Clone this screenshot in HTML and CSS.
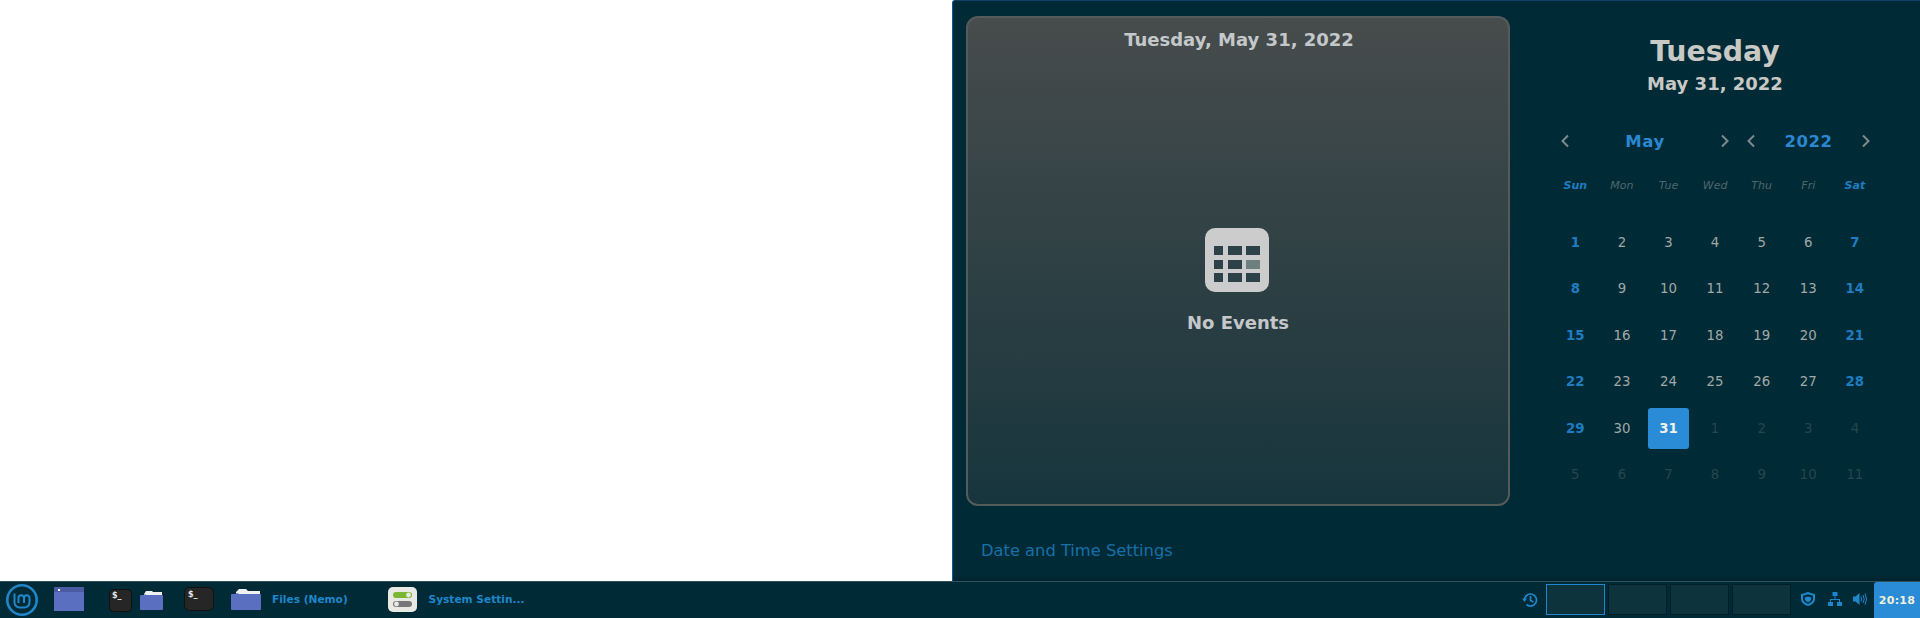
FILE: index.html
```html
<!DOCTYPE html>
<html>
  <head>
    <meta charset="UTF-8">
    <title>Calendar applet</title>
    <link rel="stylesheet" href="styles.css">
  </head>
  <body>
    <!-- Section 1: desktop and calendar popup -->
    <div class="desktop">
      <div class="window"></div>
      <div class="popup">
        <div class="events">
          <div class="events-title">Tuesday, May 31, 2022</div>
          <div class="events-empty">
            <svg class="empty-icon" width="64" height="64" viewBox="0 0 64 64">
              <rect width="64" height="64" rx="10" fill="#cccccc"/>
              <g fill="#2d4148">
                <rect x="9" y="18" width="9" height="9"/><rect x="23" y="18" width="14" height="9"/><rect x="41" y="18" width="14" height="9"/>
                <rect x="9" y="32" width="9" height="9"/><rect x="23" y="32" width="14" height="9"/><rect x="41" y="32" width="14" height="9" fill="#6f7f7f"/>
                <rect x="9" y="45" width="9" height="9"/><rect x="23" y="45" width="14" height="9"/><rect x="41" y="45" width="14" height="9"/>
              </g>
            </svg>
            <div class="empty-text">No Events</div>
          </div>
        </div>
        <div class="side">
          <div class="side-day">Tuesday</div>
          <div class="side-date">May 31, 2022</div>
          <div class="nav">
            <div class="nav-part nav-month">
              <svg class="chev" width="10" height="14" viewBox="0 0 10 14"><path d="M8 1.5 2.5 7 8 12.5"/></svg>
              <span class="nav-label">May</span>
              <svg class="chev" width="10" height="14" viewBox="0 0 10 14"><path d="M2 1.5 7.5 7 2 12.5"/></svg>
            </div>
            <div class="nav-part nav-year">
              <svg class="chev" width="10" height="14" viewBox="0 0 10 14"><path d="M8 1.5 2.5 7 8 12.5"/></svg>
              <span class="nav-label">2022</span>
              <svg class="chev" width="10" height="14" viewBox="0 0 10 14"><path d="M2 1.5 7.5 7 2 12.5"/></svg>
            </div>
          </div>
          <div class="weekdays">
            <span class="wk wk-end">Sun</span><span class="wk">Mon</span><span class="wk">Tue</span><span class="wk">Wed</span><span class="wk">Thu</span><span class="wk">Fri</span><span class="wk wk-end">Sat</span>
          </div>
          <div class="days">
            <span class="day end">1</span><span class="day">2</span><span class="day">3</span><span class="day">4</span><span class="day">5</span><span class="day">6</span><span class="day end">7</span>
            <span class="day end">8</span><span class="day">9</span><span class="day">10</span><span class="day">11</span><span class="day">12</span><span class="day">13</span><span class="day end">14</span>
            <span class="day end">15</span><span class="day">16</span><span class="day">17</span><span class="day">18</span><span class="day">19</span><span class="day">20</span><span class="day end">21</span>
            <span class="day end">22</span><span class="day">23</span><span class="day">24</span><span class="day">25</span><span class="day">26</span><span class="day">27</span><span class="day end">28</span>
            <span class="day end">29</span><span class="day">30</span><span class="day today">31</span><span class="day other">1</span><span class="day other">2</span><span class="day other">3</span><span class="day other">4</span>
            <span class="day other">5</span><span class="day other">6</span><span class="day other">7</span><span class="day other">8</span><span class="day other">9</span><span class="day other">10</span><span class="day other">11</span>
          </div>
        </div>
        <div class="settings-link">Date and Time Settings</div>
      </div>
    </div>

    <!-- Section 2: bottom panel -->
    <div class="panel">
      <svg class="logo" width="32" height="32" viewBox="0 0 32 32" fill="none" stroke="#1f86c9">
        <circle cx="16" cy="16" r="14.7" stroke-width="2.6"/>
        <path d="M8.500 9.500V18.500a5 5 0 0 0 5 5h5a5 5 0 0 0 5-5V14a2.750 2.750 0 0 0-5.500 0V19M18 14a2.750 2.750 0 0 0-5.500 0V19" stroke-width="2"/>
      </svg>
      <svg class="app raise app-window" width="30" height="24" viewBox="0 0 30 24">
        <rect width="30" height="24" fill="#5a6fc0"/>
        <rect width="30" height="5" fill="#4a5ba3"/>
        <rect x="4" y="2" width="2" height="2" fill="#ffffff"/>
      </svg>
      <svg class="app app-term-small" width="23" height="23" viewBox="0 0 23 23">
        <rect x=".5" y=".5" width="22" height="22" rx="4" fill="#262626" stroke="#111111"/>
        <text x="3" y="9" class="term-text">$_</text>
      </svg>
      <svg class="app app-folder-small" width="23" height="19" viewBox="0 0 23 19">
        <path d="M4 3 6 0h6l1 1h9v3H4z" fill="#f0f0f0"/>
        <path d="M0 5q0-1 1-1h3l1-1 1 1h16q1 0 1 1v13q0 1-1 1H1q-1 0-1-1z" fill="#5a6fc0"/>
      </svg>
      <svg class="app raise app-term" width="30" height="24" viewBox="0 0 30 24">
        <rect x=".5" y=".5" width="29" height="23" rx="5" fill="#262626" stroke="#111111"/>
        <text x="4" y="10" class="term-text">$_</text>
      </svg>
      <svg class="app raise app-folder" width="30" height="21" viewBox="0 0 30 21">
        <path d="M5 3 8 0h7l2 2h12v3H5z" fill="#f0f0f0"/>
        <path d="M0 6q0-1 1-1h3l2-1 2 1h21q1 0 1 1v14q0 1-1 1H1q-1 0-1-1z" fill="#5a6fc0"/>
      </svg>
      <span class="app-label label-files">Files (Nemo)</span>
      <svg class="app raise app-settings" width="29" height="25" viewBox="0 0 29 25">
        <rect width="29" height="25" rx="5" fill="#e8e8e4"/>
        <rect x="5" y="5" width="19" height="6" rx="3" fill="#7ab833"/>
        <circle cx="20.500" cy="8" r="2.400" fill="#e8e8e4"/>
        <rect x="5" y="14" width="19" height="6" rx="3" fill="#77777a"/>
        <circle cx="8.500" cy="17" r="2.400" fill="#e8e8e4"/>
      </svg>
      <span class="app-label label-settings">System Settin...</span>

      <div class="tray">
        <svg class="tray-icon" width="16" height="16" viewBox="0 0 16 16" fill="none" stroke="#1f86c9" stroke-width="1.7">
          <path d="M2.500 8a6 6 0 1 1 2 4.500"/>
          <path d="M0 6.500h5L2.500 10z" fill="#1f86c9" stroke="none"/>
          <path d="M8.500 4v4.500l3 1.500"/>
        </svg>
        <div class="workspaces">
          <div class="ws ws-active"></div>
          <div class="ws"></div>
          <div class="ws"></div>
          <div class="ws"></div>
        </div>
        <svg class="status status-shield" width="14" height="14" viewBox="0 0 14 16" preserveAspectRatio="none">
          <path d="M7 0 14 2.500V8c0 4-3.500 6.800-7 8-3.500-1.200-7-4-7-8V2.500z" fill="#1f86c9"/>
          <path d="M7 2.500 2 4.200V8C2 10.500 4.500 12.400 7 13.600 9.500 12.400 12 10.500 12 8V4.200z" fill="#002b36"/>
          <path d="M7 5 4 6v2.200C4 9.800 5.400 11 7 11.600 8.600 11 10 9.800 10 8.200V6z" fill="#1f86c9"/>
        </svg>
        <svg class="status status-net" width="14" height="14" viewBox="0 0 14 14" fill="#1f86c9">
          <rect x="4.500" y="0" width="5" height="4"/><rect x="0" y="10" width="5" height="4"/><rect x="9" y="10" width="5" height="4"/>
          <path d="M6.500 4h1v3h4.500v3h-1V8H3v2H2V7h4.500z"/>
        </svg>
        <svg class="status status-vol" width="14" height="14" viewBox="0 0 14 14">
          <path d="M0 4.500h2.500L6.500 1v12L2.500 9.500H0z" fill="#1f86c9"/>
          <path d="M8 4.500q1.500 2.500 0 5M10 3q2.400 4 0 8M12 1.500q3 5.500 0 11" fill="none" stroke="#1f86c9"/>
        </svg>
        <div class="clock">20:18</div>
      </div>
    </div>
  </body>
</html>
```

FILE: styles.css
```css
html, body {
  margin: 0;
  height: 618px;
  overflow: hidden;
}
body {
  font-family: "DejaVu Sans", sans-serif;
  display: flex;
  flex-direction: column;
  background-color: #ffffff;
}
.desktop {
  display: flex;
  height: 581px;
}
.window {
  width: 952px;
  background-color: #ffffff;
}

/* calendar popup */
.popup {
  flex: 1;
  display: grid;
  grid-template-columns: 558px 1fr;
  grid-template-rows: 505px 1fr;
  background: linear-gradient(#002b36 0, #002b36 573px, #00232d 581px);
  border-top: 1px solid #0a3f68;
  border-left: 1px solid #0a55a0;
  border-top-left-radius: 3px;
  box-sizing: border-box;
}
.events {
  margin: 15px 0 0 13px;
  width: 544px;
  box-sizing: border-box;
  border: 2px solid #555a5a;
  border-radius: 12px;
  background: linear-gradient(#474c4c, #17353d);
  display: flex;
  flex-direction: column;
  align-items: center;
}
.events-title {
  margin-top: 12px;
  padding-left: 2px;
  font-size: 18px;
  line-height: 19px;
  font-weight: bold;
  color: #c4c8ca;
}
.events-empty {
  margin-top: 179px;
  display: flex;
  flex-direction: column;
  align-items: center;
}
.empty-icon {
  display: block;
  margin-right: 2px;
}
.empty-text {
  margin-top: 20px;
  font-size: 18px;
  line-height: 21px;
  font-weight: bold;
  color: #c4c8ca;
}
.side {
  display: flex;
  flex-direction: column;
  align-items: stretch;
  padding-left: 41px;
}
.side-day {
  margin-top: 34px;
  width: 326px;
  text-align: center;
  font-size: 28.4px;
  line-height: 34px;
  font-weight: bold;
  color: #c8c8c4;
}
.side-date {
  margin-top: 4px;
  width: 326px;
  text-align: center;
  font-size: 18px;
  line-height: 21px;
  font-weight: bold;
  color: #c8c8c4;
}
.nav {
  display: flex;
  margin-top: 35px;
  height: 24px;
  align-items: center;
}
.nav-part {
  display: flex;
  align-items: center;
  justify-content: space-between;
}
.nav-month {
  width: 170px;
  margin-left: 8px;
}
.nav-year {
  width: 125px;
  margin-left: 16px;
}
.chev {
  fill: none;
  stroke: #7e8a8c;
  stroke-width: 2;
}
.nav-label {
  font-size: 16.5px;
  font-weight: bold;
  letter-spacing: .5px;
  color: #2a87d0;
}
.weekdays, .days {
  display: grid;
  grid-template-columns: repeat(7, 46.6px);
}
.weekdays {
  margin-top: 21px;
  height: 22px;
  align-items: center;
}
.wk {
  text-align: center;
  font-size: 11px;
  font-style: italic;
  color: #4f666e;
}
.wk-end {
  font-weight: bold;
  color: #1f7cc0;
}
.days {
  margin-top: 23px;
  grid-auto-rows: 46.5px;
}
.day {
  display: flex;
  align-items: center;
  justify-content: center;
  font-size: 13.3px;
  color: #a0a8a8;
}
.day.end {
  font-weight: bold;
  color: #1f7cc0;
}
.day.other {
  color: #264650;
}
.day.today {
  width: 41px;
  height: 41px;
  justify-self: center;
  align-self: center;
  border-radius: 3px;
  background-color: #2a8bd6;
  font-weight: bold;
  color: #f0f0ec;
}
.settings-link {
  grid-column: 1 / 3;
  padding: 35px 0 0 28px;
  font-size: 16.3px;
  line-height: 19px;
  color: #176fa8;
}

/* bottom panel */
.panel {
  height: 37px;
  box-sizing: border-box;
  border-top: 1px solid #32505a;
  background-color: #002b36;
  display: flex;
  align-items: center;
}
.logo {
  margin-left: 6px;
}
.app {
  display: block;
}
.raise {
  margin-bottom: 2px;
}
.app-window {
  margin-left: 16px;
}
.app-term-small {
  margin-left: 25px;
}
.app-folder-small {
  margin-left: 8px;
}
.app-term {
  margin-left: 21px;
}
.app-folder {
  margin-left: 17px;
}
.term-text {
  font-size: 8px;
  font-weight: bold;
  fill: #e8e8e8;
}
.app-label {
  margin-bottom: 2px;
  font-size: 10.6px;
  font-weight: bold;
  color: #1f86c9;
}
.label-files {
  margin-left: 11px;
  width: 115.5px;
}
.label-settings {
  margin-left: 12px;
}
.tray {
  margin-left: auto;
  display: flex;
  align-items: center;
  height: 100%;
}
.tray-icon {
  margin-right: 8px;
}
.workspaces {
  display: flex;
  gap: 3px;
  margin-bottom: 1px;
}
.ws {
  width: 59px;
  height: 31px;
  box-sizing: border-box;
  border: 1px solid #00212b;
  background-color: #0d333d;
}
.ws-active {
  border-color: #1f86d0;
}
.status {
  margin-bottom: 2px;
}
.status-shield {
  margin-left: 10px;
}
.status-net {
  margin-left: 13px;
}
.status-vol {
  margin-left: 11px;
  margin-right: 7px;
}
.clock {
  width: 46px;
  height: 100%;
  display: flex;
  align-items: center;
  justify-content: center;
  border-top-left-radius: 3px;
  background-color: #2a8bd6;
  font-size: 11px;
  font-weight: bold;
  letter-spacing: .3px;
  color: #f0f0dc;
}
```
